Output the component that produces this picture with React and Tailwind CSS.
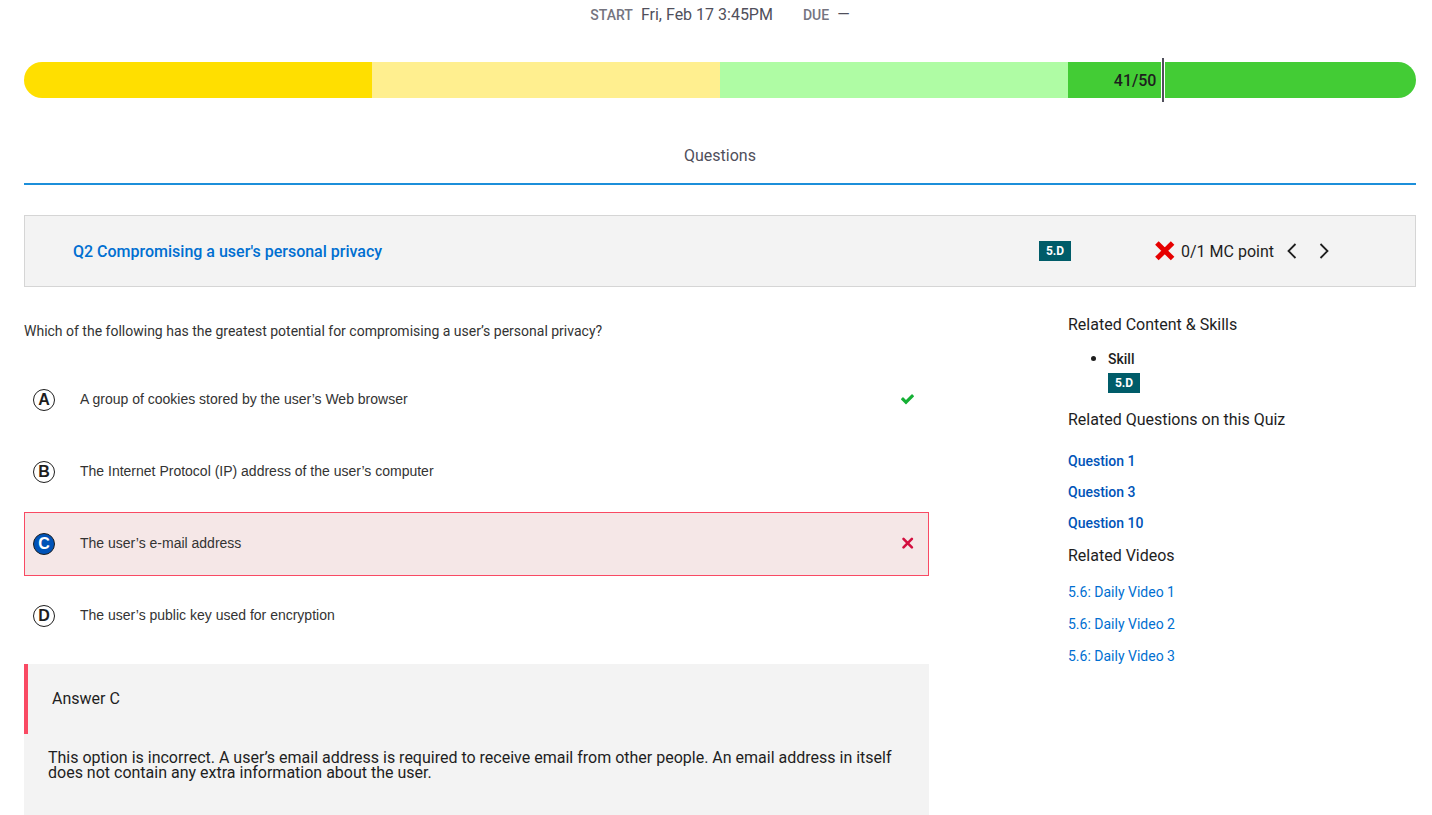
import React from "react";

const segments = [
  "rounded-l-full bg-[#ffdf00]",
  "bg-[#ffef8f]",
  "bg-[#affca4]",
  "rounded-r-full bg-[#43cc35]",
];

const options = [
  { letter: "A", text: "A group of cookies stored by the user’s Web browser", mark: "correct" },
  { letter: "B", text: "The Internet Protocol (IP) address of the user’s computer" },
  { letter: "C", text: "The user’s e-mail address", mark: "incorrect", chosen: true },
  { letter: "D", text: "The user’s public key used for encryption" },
];

const questions = ["Question 1", "Question 3", "Question 10"];
const videos = ["5.6: Daily Video 1", "5.6: Daily Video 2", "5.6: Daily Video 3"];

function CheckIcon() {
  return (
    <svg className="size-[15px] fill-[#15b035]" viewBox="0 60 1792 1792" role="img" aria-label="Correct">
      <path d="M1671 566q0 40-28 68l-724 724-136 136q-28 28-68 28t-68-28l-136-136-362-362q-28-28-28-68t28-68l136-136q28-28 68-28t68 28l294 295 656-657q28-28 68-28t68 28l136 136q28 28 28 68z" />
    </svg>
  );
}

function TimesIcon() {
  return (
    <svg className="size-[15px] fill-none stroke-[#d30f3f]" viewBox="0 0 15 15" strokeWidth="2.6" strokeLinecap="round" role="img" aria-label="Incorrect">
      <path d="M3.5 2.9 11.9 11.3M11.9 2.9 3.5 11.3" />
    </svg>
  );
}

function CrossIcon() {
  return (
    <svg className="size-5 fill-none stroke-[#e60000]" viewBox="0 0 20 20" strokeWidth="5" role="img" aria-label="Incorrect">
      <path d="M1.9 1.9 17.6 17.6M17.6 1.9 1.9 17.6" />
    </svg>
  );
}

function Chevron({ d }) {
  return (
    <svg className="h-4 w-3 fill-none stroke-[#1e1e1e]" viewBox="0 0 12 16" strokeWidth="1.8" aria-hidden="true">
      <path d={d} />
    </svg>
  );
}

function SkillBadge() {
  return (
    <span className="flex h-5 w-8 items-center justify-center bg-[#005c69] text-xs font-bold text-white">5.D</span>
  );
}

function Option({ letter, text, mark, chosen }) {
  return (
    <label
      className={
        chosen
          ? "flex h-16 items-center border border-[#f94a63] bg-[#f5e7e7] pl-2 pr-[13px]"
          : "flex h-16 items-center border border-transparent pl-2 pr-[13px]"
      }
    >
      <input type="radio" name="answer" value={letter} defaultChecked={chosen} className="sr-only" />
      <span
        className={
          chosen
            ? "flex size-[22px] items-center justify-center rounded-full border border-[#1e1e1e] bg-[#0053b8] font-['Liberation_Sans',sans-serif] text-base leading-none font-bold text-white"
            : "flex size-[22px] items-center justify-center rounded-full border border-[#1e1e1e] bg-white font-['Liberation_Sans',sans-serif] text-base leading-none font-bold text-[#1e1e1e]"
        }
      >
        {letter}
      </span>
      <span className="ml-[25px] flex flex-1 items-center justify-between pb-0.5">
        <span className="font-['Liberation_Sans',sans-serif] text-sm text-[#333333]">{text}</span>
        {mark === "correct" && <CheckIcon />}
        {mark === "incorrect" && <TimesIcon />}
      </span>
    </label>
  );
}

export default function App() {
  return (
    <div className="bg-white pr-4 pl-6 font-[Roboto,sans-serif] text-base text-[#1e1e1e]">
      <header className="flex items-center justify-center gap-[30px] pt-[3px] leading-6 text-[#504f5b]">
        <div className="flex items-center gap-2">
          <span className="text-sm font-medium text-[#75747f]">START</span>
          <span>Fri, Feb 17 3:45PM</span>
        </div>
        <div className="flex items-center gap-2">
          <span className="text-sm font-medium text-[#75747f]">DUE</span>
          <span>—</span>
        </div>
      </header>

      <div className="relative mt-[35px] flex h-9" role="meter" aria-label="Score" aria-valuemin={0} aria-valuemax={50} aria-valuenow={41}>
        {segments.map((tone) => (
          <div key={tone} className={`flex-1 ${tone}`} />
        ))}
        <div className="absolute -inset-y-1 left-0 flex w-[82%] items-center justify-end">
          <span className="mr-[5px] pt-0.5 font-medium">41/50</span>
          <span className="h-full w-1 border-x border-white bg-[#504f5b]" />
        </div>
      </div>

      <nav className="mt-[46px] flex justify-center border-b-2 border-[#1c8fda] pb-[15px]">
        <a href="#questions" className="leading-6 text-[#504f5b]">Questions</a>
      </nav>

      <main>
        <section className="mt-[30px] flex h-[72px] items-center border border-[#d5d5d5] bg-[#f3f3f3] pr-[75px] pl-12">
          <h1 className="flex-1 pt-0.5">
            <a href="#q2" className="font-medium text-[#006fd1]">Q2 Compromising a user's personal privacy</a>
          </h1>
          <SkillBadge />
          <div className="ml-[84px] flex items-center">
            <CrossIcon />
            <span className="ml-1.5 pt-0.5">0/1 MC point</span>
            <button type="button" aria-label="Previous question" className="ml-0.5 flex size-8 items-center justify-center">
              <Chevron d="M9.5 1 2.5 8l7 7" />
            </button>
            <button type="button" aria-label="Next question" className="flex size-8 items-center justify-center">
              <Chevron d="M2.5 1l7 7-7 7" />
            </button>
          </div>
        </section>

        <div className="flex justify-between">
          <div className="w-[65%]">
            <fieldset>
              <legend className="pt-[34px] text-sm text-[#333333]">
                Which of the following has the greatest potential for compromising a user’s personal privacy?
              </legend>
              <div className="mt-[27px] flex flex-col gap-2">
                {options.map((option) => (
                  <Option key={option.letter} {...option} />
                ))}
              </div>
            </fieldset>

            <section className="mt-4 bg-[#f3f3f3]">
              <h2 className="flex h-[70px] items-center border-l-4 border-[#f94a63] pl-6">Answer C</h2>
              <p className="px-6 pt-4 pb-[35px] leading-[15px]">
                This option is incorrect. A user’s email address is required to receive email from other people. An
                email address in itself does not contain any extra information about the user.
              </p>
            </section>
          </div>

          <aside className="w-1/4 pt-[26px]">
            <h2 className="leading-6">Related Content &amp; Skills</h2>
            <ul className="mt-2.5 list-disc pl-10 text-sm marker:text-base">
              <li>
                <span className="font-medium">Skill</span>
                <div className="mt-1">
                  <SkillBadge />
                </div>
              </li>
            </ul>
            <h2 className="mt-[15px] leading-6">Related Questions on this Quiz</h2>
            <ul className="mt-[19px] flex flex-col gap-[11px] text-sm font-medium text-[#0053b8]">
              {questions.map((question) => (
                <li key={question}>
                  <a href="#question">{question}</a>
                </li>
              ))}
            </ul>
            <h2 className="mt-[11px] leading-6">Related Videos</h2>
            <ul className="mt-3.5 flex flex-col gap-3 text-sm text-[#006fd1]">
              {videos.map((video) => (
                <li key={video}>
                  <a href="#video">{video}</a>
                </li>
              ))}
            </ul>
          </aside>
        </div>
      </main>
    </div>
  );
}
